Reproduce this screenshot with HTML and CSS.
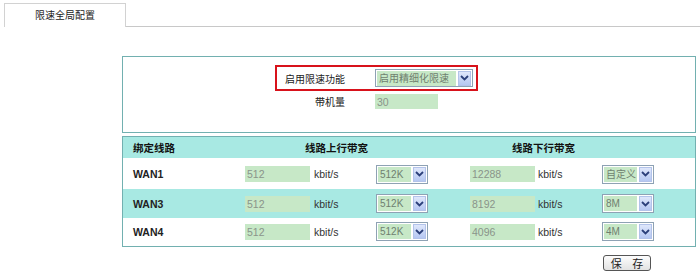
FILE: index.html
```html
<!DOCTYPE html>
<html>
<head>
<meta charset="utf-8">
<link rel="stylesheet" href="styles.css">
</head>
<body>
<div class="tabs">
  <div class="tab">限速全局配置</div>
  <div class="tab-line"></div>
</div>

<div class="main">
  <div class="box top-box">
    <div class="red-row">
      <span class="lbl">启用限速功能</span>
      <span class="sel sel-wide"><span class="val">启用精细化限速</span><span class="arr"><svg width="9" height="6" viewBox="0 0 9 6"><path d="M1 1 L4.5 4.5 L8 1" fill="none" stroke="#2b3f7a" stroke-width="1.8"/></svg></span></span>
    </div>
    <div class="plain-row">
      <span class="lbl">带机量</span>
      <span class="inp inp-short">30</span>
    </div>
  </div>

  <div class="box table-box">
    <div class="grid head">
      <span class="h1">绑定线路</span>
      <span class="h2">线路上行带宽</span>
      <span class="h3">线路下行带宽</span>
    </div>
    <div class="grid row">
      <span class="wan">WAN1</span>
      <span class="inp">512</span><span class="unit">kbit/s</span>
      <span class="sel"><span class="val">512K</span><span class="arr"><svg width="9" height="6" viewBox="0 0 9 6"><path d="M1 1 L4.5 4.5 L8 1" fill="none" stroke="#2b3f7a" stroke-width="1.8"/></svg></span></span>
      <span class="inp">12288</span><span class="unit">kbit/s</span>
      <span class="sel"><span class="val">自定义</span><span class="arr"><svg width="9" height="6" viewBox="0 0 9 6"><path d="M1 1 L4.5 4.5 L8 1" fill="none" stroke="#2b3f7a" stroke-width="1.8"/></svg></span></span>
    </div>
    <div class="grid row alt">
      <span class="wan">WAN3</span>
      <span class="inp">512</span><span class="unit">kbit/s</span>
      <span class="sel"><span class="val">512K</span><span class="arr"><svg width="9" height="6" viewBox="0 0 9 6"><path d="M1 1 L4.5 4.5 L8 1" fill="none" stroke="#2b3f7a" stroke-width="1.8"/></svg></span></span>
      <span class="inp">8192</span><span class="unit">kbit/s</span>
      <span class="sel"><span class="val">8M</span><span class="arr"><svg width="9" height="6" viewBox="0 0 9 6"><path d="M1 1 L4.5 4.5 L8 1" fill="none" stroke="#2b3f7a" stroke-width="1.8"/></svg></span></span>
    </div>
    <div class="grid row">
      <span class="wan">WAN4</span>
      <span class="inp">512</span><span class="unit">kbit/s</span>
      <span class="sel"><span class="val">512K</span><span class="arr"><svg width="9" height="6" viewBox="0 0 9 6"><path d="M1 1 L4.5 4.5 L8 1" fill="none" stroke="#2b3f7a" stroke-width="1.8"/></svg></span></span>
      <span class="inp">4096</span><span class="unit">kbit/s</span>
      <span class="sel"><span class="val">4M</span><span class="arr"><svg width="9" height="6" viewBox="0 0 9 6"><path d="M1 1 L4.5 4.5 L8 1" fill="none" stroke="#2b3f7a" stroke-width="1.8"/></svg></span></span>
    </div>
  </div>

  <div class="actions">
    <button class="btn">保 存</button>
  </div>
</div>
</body>
</html>
```

FILE: styles.css
```css
html, body {
  margin: 0;
  padding: 0;
  background: #fff;
  font-family: "Liberation Sans", "Noto Sans CJK SC", sans-serif;
  font-size: 10px;
  color: #222;
}

.tabs {
  display: flex;
  align-items: flex-end;
  padding: 3px 0 0 4px;
  height: 24px;
}
.tab {
  width: 120px;
  height: 23px;
  border: 1px solid #d2d2d2;
  border-bottom: none;
  text-align: center;
  line-height: 24px;
  color: #222;
  background: #fff;
}
.tab-line {
  flex: 1;
  border-bottom: 1px solid #c8c8c8;
}

.main {
  margin: 29px 4px 0 122px;
}

.box {
  border: 1px solid #72b0b0;
  background: #fff;
}

.top-box {
  padding-top: 8px;
  box-sizing: border-box;
  height: 77px;
  display: flex;
  flex-direction: column;
}

.red-row {
  margin-left: 152px;
  width: 199px;
  height: 22px;
  border: 2px solid #d8121b;
  display: flex;
  align-items: center;
}
.plain-row {
  margin-left: 154px;
  margin-top: 2px;
  display: flex;
  align-items: center;
  height: 16px;
}
.lbl {
  width: 68px;
  text-align: right;
  margin-right: 30px;
  color: #222;
}

.inp {
  display: inline-block;
  width: 65px;
  height: 16px;
  line-height: 16px;
  background: #c7e8c7;
  color: #8a948a;
  font-size: 10.5px;
  box-sizing: border-box;
}
.inp-short {
  width: 63px;
  padding-left: 2px;
  height: 15px;
}

.sel {
  display: inline-flex;
  align-items: center;
  width: 52px;
  height: 19px;
  box-sizing: border-box;
  border: 1px solid #8ea2b4;
  background: #fff;
  padding: 1px;
}
.sel .val {
  flex: 1;
  height: 15px;
  line-height: 15px;
  background: #c7e8c7;
  color: #6f7f6f;
  padding-left: 2px;
  overflow: hidden;
  white-space: nowrap;
}
.sel .arr {
  width: 13px;
  height: 15px;
  margin-left: 2px;
  background: linear-gradient(#dfe7fb, #b5c7f2);
  border: 1px solid #b3c3ea;
  box-sizing: border-box;
  display: flex;
  align-items: center;
  justify-content: center;
}
.sel-wide {
  width: 98px;
  height: 18px;
}

.table-box {
  margin-top: 3px;
  padding-bottom: 1px;
}

.grid {
  display: grid;
  grid-template-columns: 112px 67px 64px 94px 66px 66px 1fr;
  align-items: center;
  padding-left: 10px;
}
.head {
  height: 21px;
  background: #a8e9e3;
  font-weight: bold;
  font-size: 10.5px;
  color: #111;
  margin-bottom: 1px;
}
.h1 { grid-column: 1; }
.h2 { grid-column: 2 / span 3; padding-left: 60px; }
.h3 { grid-column: 5 / span 3; padding-left: 42px; }

.row {
  height: 30px;
}
.row.alt {
  background: #a8e9e3;
  height: 29px;
}
.row:last-child { height: 27px; }
.wan {
  font-weight: bold;
  font-size: 10.5px;
  color: #222;
}
.row .inp { padding-left: 2px; }
.unit {
  color: #333;
  font-size: 10.5px;
  padding-left: 2px;
}

.actions {
  display: flex;
  justify-content: flex-end;
  padding: 8px 45px 0 0;
}
.btn {
  width: 48px;
  height: 16px;
  padding: 0 0 0 4px;
  border: 1px solid #555;
  border-radius: 3px;
  background: linear-gradient(#fdfdfd, #e2e2e2);
  font-family: "Noto Sans CJK SC", sans-serif;
  font-size: 11px;
  letter-spacing: 4px;
  line-height: 13px;
  color: #222;
}
```
